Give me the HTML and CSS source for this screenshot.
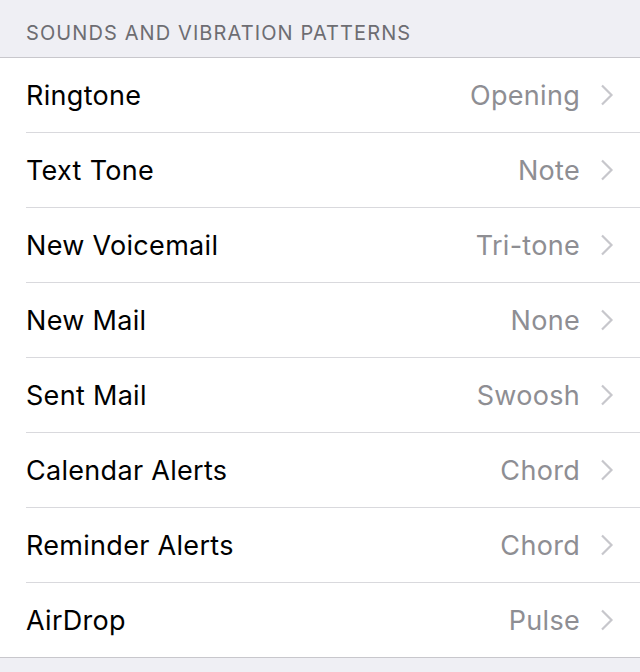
FILE: index.html
```html
<!DOCTYPE html>
<html lang="en">

<head>
    <meta charset="UTF-8">
    <title>Sounds</title>
    <link rel="stylesheet" href="styles.css">
</head>

<body>
    <!-- intestazione della sezione -->
    <div class="section-header">SOUNDS AND VIBRATION PATTERNS</div>

    <!-- elenco delle righe -->
    <ul class="list">
        <li class="row"><span class="row-title">Ringtone</span><span class="row-value">Opening</span><svg class="chevron" viewBox="0 0 14 22"><path d="M2 1.5 L11.5 11 L2 20.5" /></svg></li>
        <li class="row"><span class="row-title">Text Tone</span><span class="row-value">Note</span><svg class="chevron" viewBox="0 0 14 22"><path d="M2 1.5 L11.5 11 L2 20.5" /></svg></li>
        <li class="row"><span class="row-title">New Voicemail</span><span class="row-value">Tri-tone</span><svg class="chevron" viewBox="0 0 14 22"><path d="M2 1.5 L11.5 11 L2 20.5" /></svg></li>
        <li class="row"><span class="row-title">New Mail</span><span class="row-value">None</span><svg class="chevron" viewBox="0 0 14 22"><path d="M2 1.5 L11.5 11 L2 20.5" /></svg></li>
        <li class="row"><span class="row-title">Sent Mail</span><span class="row-value">Swoosh</span><svg class="chevron" viewBox="0 0 14 22"><path d="M2 1.5 L11.5 11 L2 20.5" /></svg></li>
        <li class="row"><span class="row-title">Calendar Alerts</span><span class="row-value">Chord</span><svg class="chevron" viewBox="0 0 14 22"><path d="M2 1.5 L11.5 11 L2 20.5" /></svg></li>
        <li class="row"><span class="row-title">Reminder Alerts</span><span class="row-value">Chord</span><svg class="chevron" viewBox="0 0 14 22"><path d="M2 1.5 L11.5 11 L2 20.5" /></svg></li>
        <li class="row"><span class="row-title">AirDrop</span><span class="row-value">Pulse</span><svg class="chevron" viewBox="0 0 14 22"><path d="M2 1.5 L11.5 11 L2 20.5" /></svg></li>
    </ul>
</body>

</html>
```

FILE: styles.css
```css
/* pagina */
body {
    margin: 0;
    background: #efeff4;
    font-family: 'Inter', 'Liberation Sans', sans-serif;
}

/* testo grigio in maiuscolo sopra la lista */
.section-header {
    height: 57px;
    box-sizing: border-box;
    padding: 21px 26px 0;
    font-size: 20px;
    color: #6d6d72;
    letter-spacing: 1.1px;
}

.list {
    list-style: none;
    margin: 0;
    padding: 0 0 0 26px;
    background: white;
    border-top: 1px solid #c8c7cc;
    border-bottom: 1px solid #c8c7cc;
}

.row {
    display: flex;
    align-items: center;
    height: 74px;
    padding-right: 26px;
    border-bottom: 1px solid #d9d9dd;
    font-size: 27px;
    letter-spacing: 0.3px;
}

.row:last-child {
    border-bottom: none;
}

.row-title {
    flex: 1;
    color: #000;
}

.row-value {
    color: #8e8e93;
}

.chevron {
    width: 14px;
    height: 22px;
    margin-left: 20px;
    fill: none;
    stroke: #c7c7cc;
    stroke-width: 2.2;
}
```
